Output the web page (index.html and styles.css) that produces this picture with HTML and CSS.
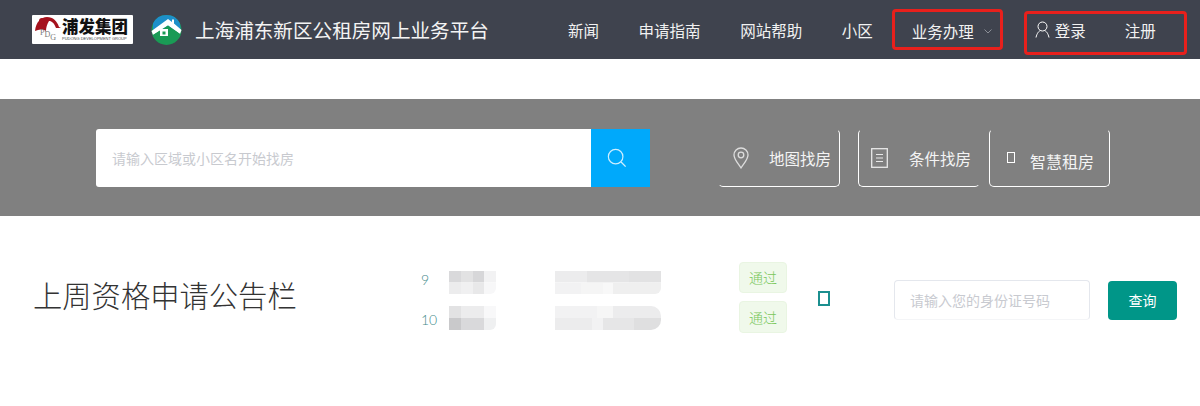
FILE: index.html
```html
<!DOCTYPE html>
<html lang="zh-CN">
<head>
  <meta charset="UTF-8">
  <title>上海浦东新区公租房网上业务平台</title>
  <link rel="stylesheet" href="styles.css">
</head>
<body>

  <header class="topbar">
    <div class="group-logo">
      <svg class="group-mark" viewBox="0 0 26 27" width="26" height="27">
        <path d="M0 15C1 6 6 1 12 1c6 0 10 4 12 10l2 1-5 0C19 7 17 5 14 5c-2 3-3 7-3 10-3-2-7-2-11 0z" fill="#a5121d"/>
        <circle cx="7" cy="5" r="3" fill="#a5121d"/>
        <text x="5" y="19" class="mark-text">P<tspan dy="2">D</tspan><tspan dy="3">G</tspan></text>
      </svg>
      <div class="group-name">
        <span class="group-cn">浦发集团</span>
        <span class="group-en">PUDONG DEVELOPMENT GROUP</span>
      </div>
    </div>
    <svg class="house" viewBox="0 0 31 30" width="31" height="30">
      <circle cx="15.5" cy="15" r="15" fill="#1a9a55"/>
      <path d="M2 8.500A15 15 0 0 1 29 8.500L29.500 15 2 15z" fill="#1d8fc9"/>
      <path d="M.5 16 17 4 21 7 21 4.500 23 4.500 23 8.500 30.500 15 29 19 17 10.500 2 20z" fill="#fff"/>
      <path d="M2 20 17 10.500 29 19 29 22 2 22z" fill="#1a9a55"/>
      <rect x="9" y="14" width="8" height="7" fill="#fff"/>
      <rect x="11.500" y="16.500" width="3" height="3" fill="#1a9a55"/>
    </svg>
    <h1 class="site-title">上海浦东新区公租房网上业务平台</h1>

    <nav class="nav">
      <a class="nav-link">新闻</a>
      <a class="nav-link">申请指南</a>
      <a class="nav-link">网站帮助</a>
      <a class="nav-link">小区</a>
    </nav>
    <div class="mark-box biz">
      <a class="nav-link">业务办理</a>
      <svg class="chevron" viewBox="0 0 8 5" width="8" height="5"><path d="M.5.5 4 4 7.5.5" fill="none" stroke="#8b8e96"/></svg>
    </div>
    <div class="mark-box account">
      <svg class="user" viewBox="0 0 15 17" width="15" height="17">
        <circle cx="7.500" cy="5.500" r="4.500" fill="none" stroke="#fff"/>
        <path d="M1 16.500C2 12 4 10 5.500 9.500M14 16.500C13 12 11 10 9.500 9.500" fill="none" stroke="#fff"/>
      </svg>
      <a class="nav-link login">登录</a>
      <a class="nav-link">注册</a>
    </div>
  </header>

  <section class="search-band">
    <div class="search">
      <div class="search-input">请输入区域或小区名开始找房</div>
      <div class="search-btn">
        <svg viewBox="0 0 22 22" width="20" height="20">
          <circle cx="9.500" cy="9.500" r="8" fill="none" stroke="#cdeeff" stroke-width="1.300"/>
          <path d="M15.500 15.500 20.500 20.500" stroke="#cdeeff" stroke-width="1.500"/>
        </svg>
      </div>
    </div>

    <a class="quick quick-map">
      <svg viewBox="0 0 16 22" width="16" height="22">
        <path d="M8 21C4 15 1 12 1 8a7 7 0 0 1 14 0c0 4-3 7-7 13z" fill="none" stroke="#ddd" stroke-width="1.300"/>
        <circle cx="8" cy="8" r="2.800" fill="none" stroke="#ddd" stroke-width="1.300"/>
      </svg>
      <span class="quick-text">地图找房</span>
    </a>
    <a class="quick quick-filter">
      <svg viewBox="0 0 17 20" width="17" height="20">
        <rect x=".7" y=".7" width="15.600" height="18.600" fill="none" stroke="#e8e8e8" stroke-width="1.300"/>
        <path d="M5 6.500h7M5 10h7M5 13.500h7" stroke="#e8e8e8"/>
      </svg>
      <span class="quick-text">条件找房</span>
    </a>
    <a class="quick quick-smart">
      <span class="tofu tofu-white"></span>
      <span class="quick-text">智慧租房</span>
    </a>
  </section>

  <section class="notice">
    <h2 class="notice-title">上周资格申请公告栏</h2>

    <div class="notice-list">
      <span class="num">9</span>
      <span class="mosaic name-a"></span>
      <span class="mosaic addr-a"></span>
      <span class="badge">通过</span>

      <span class="num">10</span>
      <span class="mosaic name-b"></span>
      <span class="mosaic addr-b"></span>
      <span class="badge badge-tall">通过</span>
    </div>

    <span class="tofu tofu-teal"></span>

    <div class="id-input">请输入您的身份证号码</div>
    <button class="query-btn">查询</button>
  </section>

</body>
</html>
```

FILE: styles.css
```css
* {
  box-sizing: border-box;
}

body {
  margin: 0;
  background: #fff;
  font-family: "Noto Sans CJK SC", "Noto Sans", sans-serif;
  font-weight: 300;
  overflow: hidden;
}

/* top bar */
.topbar {
  display: flex;
  align-items: center;
  height: 59px;
  padding-left: 32px;
  background: #3f434e;
  color: #eee;
}

.group-logo {
  display: flex;
  align-items: center;
  width: 101px;
  height: 29px;
  padding-left: 3px;
  background: #fff;
  border-radius: 1px;
}

.group-mark {
  flex: none;
}

.mark-text {
  font-family: "Liberation Serif", serif;
  font-size: 8px;
  fill: #777;
}

.group-name {
  display: flex;
  flex-direction: column;
  margin-left: 1px;
  color: #111;
}

.group-cn {
  font-size: 16.500px;
  font-weight: 900;
  line-height: 19px;
  white-space: nowrap;
}

.group-en {
  font-family: "Liberation Sans", sans-serif;
  font-size: 4px;
  line-height: 6px;
  white-space: nowrap;
  color: #444;
}

.house {
  margin-left: 18px;
  flex: none;
}

.site-title {
  margin: 0 0 0 13px;
  width: 373px;
  font-size: 19.600px;
  font-weight: 400;
  color: #f4f4f4;
  white-space: nowrap;
}

.nav {
  display: flex;
  gap: 39.600px;
}

.nav-link {
  font-size: 15.500px;
  font-weight: 400;
  line-height: 22px;
  white-space: nowrap;
  color: #f2f2f2;
}

.mark-box {
  display: flex;
  align-items: center;
  border: 3px solid #e8201c;
  border-radius: 4px;
}

.biz {
  width: 111px;
  height: 41px;
  margin-left: 19px;
  padding: 3px 0 0 17px;
}

.chevron {
  margin-left: 10px;
}

.account {
  width: 163px;
  height: 44px;
  margin: 6px 0 0 21px;
  padding-left: 8px;
  padding-bottom: 6px;
}

.user {
  flex: none;
}

.login {
  margin: 0 39px 0 5px;
}

/* search band */
.search-band {
  display: flex;
  align-items: center;
  height: 117px;
  margin-top: 40px;
  padding-left: 96px;
  background: #808080;
}

.search {
  display: flex;
  width: 554px;
  height: 58px;
}

.search-input {
  flex: 1;
  padding-left: 16px;
  background: #fff;
  border-radius: 3px 0 0 3px;
  font-size: 14px;
  font-weight: 400;
  line-height: 58px;
  color: #c8cacf;
}

.search-btn {
  display: flex;
  align-items: center;
  justify-content: center;
  width: 59px;
  padding-right: 8px;
  background: #00a9fb;
}

.quick {
  display: flex;
  align-items: center;
  width: 122px;
  height: 58px;
  padding-left: 14px;
  border: 1px solid #fff;
  border-top-color: transparent;
  border-radius: 5px;
  color: #f4f4f4;
}

.quick-map {
  margin-left: 68px;
  border-left-color: transparent;
}

.quick-filter {
  margin-left: 18px;
  padding-left: 12px;
  border-right-color: transparent;
}

.quick-filter .quick-text {
  margin-left: 21px;
}

.quick-smart {
  width: 121px;
  margin-left: 9px;
  padding-left: 17px;
}

.quick-text {
  margin-left: 20px;
  font-size: 15.500px;
  font-weight: 400;
  white-space: nowrap;
}

.quick-smart .quick-text {
  margin: 6px 0 0 15px;
  font-size: 16px;
}

.tofu {
  display: block;
  flex: none;
  border-style: solid;
}

.tofu-white {
  width: 8px;
  height: 11px;
  border-width: 1px;
  border-color: #fff;
}

.tofu-teal {
  width: 12px;
  height: 15px;
  margin: 1px 0 0 31px;
  border-width: 2px;
  border-color: #1b8f8f;
}

/* notice row */
.notice {
  display: flex;
  align-items: center;
  padding: 46px 0 0 33px;
}

.notice-title {
  width: 388px;
  margin: -7px 0 0;
  font-size: 29.300px;
  font-weight: 300;
  color: #333;
  white-space: nowrap;
}

.notice-list {
  display: grid;
  grid-template-columns: 28px 47px 165px 126px;
  row-gap: 8px;
  align-items: center;
}

.num {
  margin-top: 4px;
  font-family: Lato, sans-serif;
  font-weight: 300;
  font-size: 14px;
  color: #3f8a8a;
}

.mosaic {
  display: block;
  align-self: end;
  height: 23px;
  margin-bottom: -1px;
  border-radius: 0 0 6px 0;
  background-repeat: no-repeat;
  background-size: 100% 50%;
  background-position: top, bottom;
  filter: blur(.4px);
}

.name-a {
  background-image:
    linear-gradient(90deg, #d9d9db 25%, #e2e2e3 25% 50%, #d7d7d9 50% 75%, #f2f2f3 75%),
    linear-gradient(90deg, #ececed 25%, #f0f0f1 25% 50%, #e8e8e9 50% 75%, #f7f7f8 75%);
}

.addr-a {
  margin-left: 59px;
  background-image:
    linear-gradient(90deg, #ececed 30%, #e5e5e6 30% 70%, #e2e2e3 70%),
    linear-gradient(90deg, #f2f2f3 25%, #f5f5f5 25% 45%, #f8f8f8 45% 55%, #efefef 55%);
}

.name-b {
  height: 24px;
  margin-bottom: 3px;
  background-image:
    linear-gradient(90deg, #e2e2e3 25%, #ececed 25% 75%, #f8f8f9 75%),
    linear-gradient(90deg, #c9c9cb 25%, #d9d9db 25% 75%, #eff0f1 75%);
}

.addr-b {
  height: 24px;
  margin: 0 0 3px 59px;
  border-radius: 0 10px 10px 0;
  background-image:
    linear-gradient(90deg, #f2f2f3 40%, #f6f6f6 40% 55%, #ececed 55%),
    linear-gradient(90deg, #ececed 35%, #f2f2f3 35% 45%, #e6e6e7 45% 75%, #dfdfe0 75%);
}

.badge {
  display: block;
  height: 31px;
  margin-left: 78px;
  background: #f0f9eb;
  border: 1px solid #e9f5e2;
  border-radius: 4px;
  font-size: 14px;
  line-height: 29px;
  text-align: center;
  color: #79c75a;
  white-space: nowrap;
}

.badge-tall {
  height: 32px;
  line-height: 30px;
}

.id-input {
  width: 196px;
  height: 40px;
  margin: 5px 0 0 64px;
  padding-left: 15px;
  border: 1px solid #e4e7ed;
  border-bottom-color: #f4f5f7;
  border-radius: 4px;
  font-size: 14px;
  font-weight: 400;
  line-height: 38px;
  color: #c8cad0;
  white-space: nowrap;
}

.query-btn {
  width: 69px;
  height: 39px;
  margin: 5px 0 0 18px;
  border: none;
  border-radius: 4px;
  background: #009688;
  color: #fff;
  font-family: inherit;
  font-weight: 400;
  font-size: 14px;
}
```
